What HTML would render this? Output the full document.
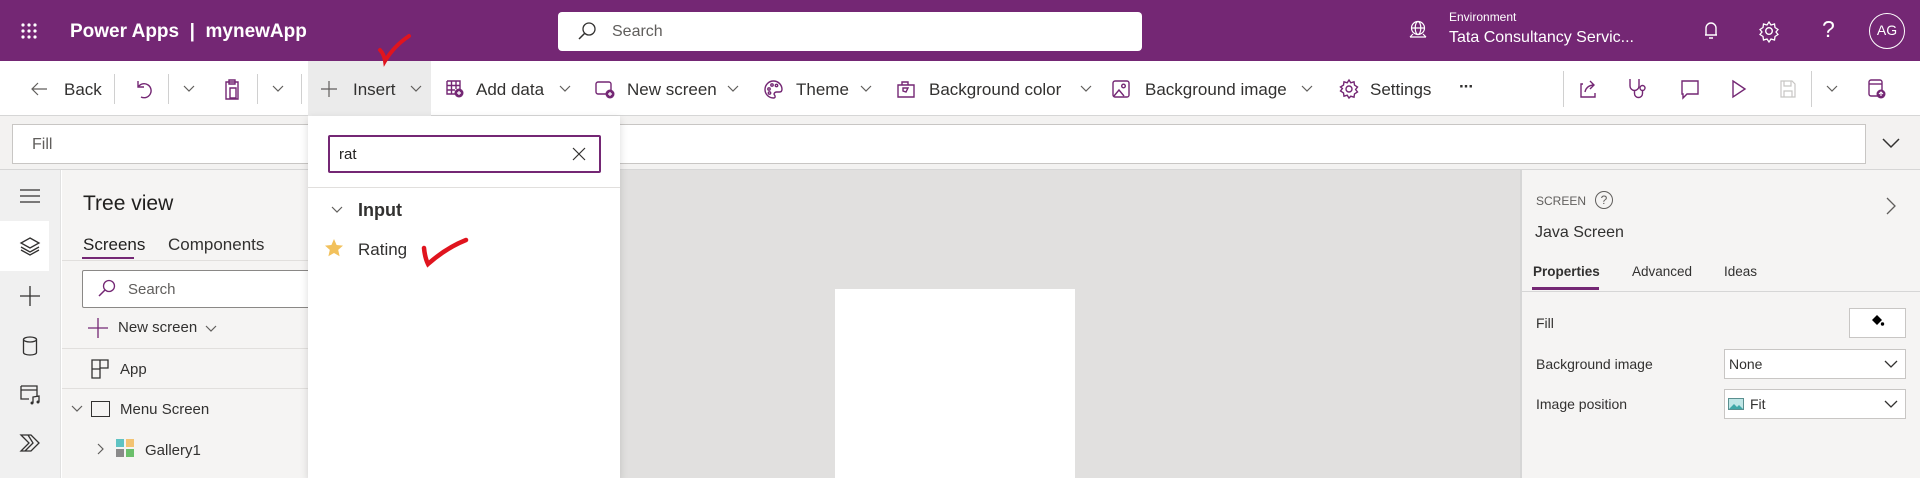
<!DOCTYPE html>
<html><head><meta charset="utf-8"><style>
*{margin:0;padding:0;box-sizing:border-box}
body{width:1920px;height:478px;position:relative;overflow:hidden;font-family:"Liberation Sans",sans-serif;color:#323130;background:#fff}
.a{position:absolute}
.t{position:absolute;white-space:nowrap;line-height:1}
svg{position:absolute;overflow:visible}
.ic{stroke:#742774;fill:none;stroke-width:1.4}
.gr{stroke:#605e5c;fill:none;stroke-width:1.2}
</style></head><body>
<!-- header -->
<div class="a" style="left:0;top:0;width:1920px;height:61px;background:#742774"></div>
<svg style="left:21px;top:23px" width="16" height="16"><g fill="#fff"><circle cx="2" cy="2" r="1.6"/><circle cx="8" cy="2" r="1.6"/><circle cx="14" cy="2" r="1.6"/><circle cx="2" cy="8" r="1.6"/><circle cx="8" cy="8" r="1.6"/><circle cx="14" cy="8" r="1.6"/><circle cx="2" cy="14" r="1.6"/><circle cx="8" cy="14" r="1.6"/><circle cx="14" cy="14" r="1.6"/></g></svg>
<div class="t" style="left:70px;top:22px;color:#fff;font-size:19px;font-weight:bold">Power Apps &nbsp;|&nbsp; mynewApp</div>
<div class="a" style="left:558px;top:12px;width:584px;height:39px;background:#fff;border-radius:4px"></div>
<svg style="left:578px;top:22px" width="18" height="18"><circle cx="11" cy="7" r="6" stroke="#323130" fill="none" stroke-width="1.3"/><path d="M6.5 11.5 L1 17" stroke="#323130" stroke-width="1.5"/></svg>
<div class="t" style="left:612px;top:24px;font-size:16px;color:#605e5c">Search</div>
<svg style="left:1408px;top:20px" width="20" height="20"><g stroke="#fff" fill="none" stroke-width="1.2"><circle cx="10" cy="8" r="6.5"/><ellipse cx="10" cy="8" rx="2.8" ry="6.5"/><path d="M3.5 8h13M2 17h16M5 14l-3 3M15 14l3 3"/></g></svg>
<div class="t" style="left:1449px;top:11px;color:#fff;font-size:12px">Environment</div>
<div class="t" style="left:1449px;top:30px;color:#fff;font-size:16px">Tata Consultancy Servic...</div>
<svg style="left:1702px;top:21px" width="18" height="20"><path d="M4 14V7a5 5 0 0 1 10 0v7H3h12M7 17h4" stroke="#fff" fill="none" stroke-width="1.4"/></svg>
<svg style="left:1758px;top:20px" width="22" height="22"><circle cx="11" cy="11" r="3.3" stroke="#fff" fill="none" stroke-width="1.4"/><path d="M11 2l2 3 3.5-1 .5 3.5 3 2-2 2.5 2 2.5-3 2-.5 3.5-3.5-1-2 3-2-3-3.5 1-.5-3.5-3-2 2-2.5-2-2.5 3-2 .5-3.5 3.5 1z" stroke="#fff" fill="none" stroke-width="1.3"/></svg>
<div class="t" style="left:1822px;top:18px;color:#fff;font-size:23px">?</div>
<div class="a" style="left:1869px;top:13px;width:36px;height:36px;border:1.5px solid #fff;border-radius:50%;color:#fff;font-size:14px;text-align:center;line-height:33px">AG</div>
<!-- toolbar -->
<div class="a" style="left:0;top:115px;width:1920px;height:1px;background:#d6d6d6"></div>
<div class="a" style="left:308px;top:61px;width:123px;height:55px;background:#ebebeb"></div>
<svg style="left:30px;top:81px" width="18" height="16"><path d="M17 8H2M8 2L2 8l6 6" class="gr" stroke-width="1.4"/></svg>
<div class="t" style="left:64px;top:81px;font-size:17px">Back</div>
<div class="a" style="left:114px;top:74px;width:1px;height:30px;background:#d0d0d0"></div>
<svg style="left:134px;top:79px" width="18" height="20"><path d="M4 2v6h6M4.5 7.5A7 7 0 1 1 7 18" class="ic"/></svg>
<div class="a" style="left:168px;top:74px;width:1px;height:30px;background:#d0d0d0"></div>
<svg style="left:183px;top:85px" width="12" height="8"><path d="M1 1l5 5 5-5" class="gr"/></svg>
<svg style="left:223px;top:78px" width="18" height="22"><path d="M3 4h12v17H3zM6 2h6v4H6zM7 10h6v10H7z" class="ic"/></svg>
<div class="a" style="left:257px;top:74px;width:1px;height:30px;background:#d0d0d0"></div>
<svg style="left:272px;top:85px" width="12" height="8"><path d="M1 1l5 5 5-5" class="gr"/></svg>
<div class="a" style="left:301px;top:74px;width:1px;height:30px;background:#d0d0d0"></div>
<svg style="left:321px;top:81px" width="16" height="16"><path d="M8 0v16M0 8h16" class="gr" stroke-width="1.4"/></svg>
<div class="t" style="left:353px;top:81px;font-size:17px">Insert</div>
<svg style="left:410px;top:85px" width="12" height="8"><path d="M1 1l5 5 5-5" class="gr"/></svg>
<svg style="left:446px;top:80px" width="18" height="18"><path d="M1 1h13v8M1 1v13h8M1 5.5h13M1 10h8M5.5 1v13M10 1v8" class="ic"/><circle cx="13" cy="13" r="4.5" fill="#742774"/><path d="M13 11v4M11 13h4" stroke="#fff" stroke-width="1.2"/></svg>
<div class="t" style="left:476px;top:81px;font-size:17px">Add data</div>
<svg style="left:559px;top:85px" width="12" height="8"><path d="M1 1l5 5 5-5" class="gr"/></svg>
<svg style="left:595px;top:81px" width="20" height="18"><rect x="1" y="1" width="15" height="12" rx="2" class="ic"/><circle cx="15" cy="13" r="4.5" fill="#742774"/><path d="M15 11v4M13 13h4" stroke="#fff" stroke-width="1.2"/></svg>
<div class="t" style="left:627px;top:81px;font-size:17px">New screen</div>
<svg style="left:727px;top:85px" width="12" height="8"><path d="M1 1l5 5 5-5" class="gr"/></svg>
<svg style="left:764px;top:80px" width="19" height="19"><path d="M9.5 1a8.5 8.5 0 1 0 0 17c2 0 2-2 1-3s0-3 2-3h3c2 0 2.5-1.5 2.5-3A8.5 8.5 0 0 0 9.5 1z" class="ic"/><circle cx="5" cy="9" r="1.2" class="ic"/><circle cx="8" cy="5" r="1.2" class="ic"/><circle cx="12.5" cy="5.5" r="1.2" class="ic"/><circle cx="5.5" cy="13" r="1.2" class="ic"/></svg>
<div class="t" style="left:796px;top:81px;font-size:17px">Theme</div>
<svg style="left:860px;top:85px" width="12" height="8"><path d="M1 1l5 5 5-5" class="gr"/></svg>
<svg style="left:896px;top:79px" width="20" height="20"><path d="M2 6h16v12H2zM6 6V3h6v3M7 9l5 0-2 4-3-1z" class="ic"/></svg>
<div class="t" style="left:929px;top:81px;font-size:17px">Background color</div>
<svg style="left:1080px;top:85px" width="12" height="8"><path d="M1 1l5 5 5-5" class="gr"/></svg>
<svg style="left:1112px;top:80px" width="18" height="18"><rect x="1" y="1" width="16" height="16" rx="2" class="ic"/><circle cx="11.5" cy="6" r="1.8" class="ic"/><path d="M2 16l5-6 5 6" class="ic"/></svg>
<div class="t" style="left:1145px;top:81px;font-size:17px">Background image</div>
<svg style="left:1301px;top:85px" width="12" height="8"><path d="M1 1l5 5 5-5" class="gr"/></svg>
<svg style="left:1339px;top:79px" width="20" height="20"><circle cx="10" cy="10" r="3" class="ic"/><path d="M10 1l1.8 2.8 3.2-1 .5 3.3 3 1.9-1.9 2.5 1.9 2.5-3 1.9-.5 3.3-3.2-1L10 19l-1.8-2.8-3.2 1-.5-3.3-3-1.9 1.9-2.5L1.5 8l3-1.9.5-3.3 3.2 1z" class="ic"/></svg>
<div class="t" style="left:1370px;top:81px;font-size:17px">Settings</div>
<div class="t" style="left:1459px;top:78px;font-size:17px;font-weight:bold;letter-spacing:-1px">···</div>
<div class="a" style="left:1563px;top:71px;width:1px;height:36px;background:#d0d0d0"></div>
<svg style="left:1580px;top:80px" width="18" height="18"><path d="M3 4H1v13h14v-4M5 12c1-5 5-7 9-7M10 1l4 4-4 4" class="ic"/></svg>
<svg style="left:1628px;top:78px" width="20" height="22"><path d="M2 1v7a4.5 4.5 0 0 0 9 0V1M6.5 12.5v3a4 4 0 0 0 8 0v-3" class="ic"/><circle cx="14.5" cy="10" r="2.5" class="ic"/></svg>
<svg style="left:1680px;top:80px" width="20" height="20"><path d="M2 1h16v13H7l-4 4v-4H2z" class="ic"/></svg>
<svg style="left:1731px;top:80px" width="16" height="18"><path d="M2 1l12 8-12 8z" class="ic"/></svg>
<svg style="left:1780px;top:80px" width="16" height="18"><path d="M1 1h11l3 3v13H1zM4 1v5h7V1M4 17v-6h8v6" stroke="#c8c6c4" fill="none" stroke-width="1.2"/></svg>
<div class="a" style="left:1811px;top:71px;width:1px;height:36px;background:#d0d0d0"></div>
<svg style="left:1826px;top:85px" width="12" height="8"><path d="M1 1l5 5 5-5" class="gr"/></svg>
<svg style="left:1868px;top:79px" width="18" height="20"><rect x="1" y="1" width="13" height="16" rx="2" class="ic"/><path d="M1 5h13" class="ic"/><circle cx="13" cy="15" r="4.5" fill="#742774"/><path d="M13 17v-4M11 15l2-2 2 2" stroke="#fff" stroke-width="1.1" fill="none"/></svg>
<!-- red check near insert -->
<svg style="left:376px;top:32px" width="40" height="32"><path d="M4 18 Q8 22 9 29 Q18 14 33 4" stroke="#e0141e" stroke-width="4" fill="none" stroke-linecap="round"/></svg>
<!-- formula bar -->
<div class="a" style="left:0;top:116px;width:1920px;height:54px;background:#f3f2f1"></div>
<div class="a" style="left:12px;top:124px;width:1854px;height:40px;background:#fff;border:1px solid #c8c6c4"></div>
<div class="t" style="left:32px;top:137px;font-size:16px;color:#605e5c">Fill</div>
<svg style="left:1882px;top:138px" width="18" height="11"><path d="M1 1l8 8 8-8" stroke="#323130" fill="none" stroke-width="1.5"/></svg>
<div class="a" style="left:0;top:169px;width:1920px;height:1px;background:#d6d6d6"></div>
<!-- left rail -->
<div class="a" style="left:0;top:170px;width:61px;height:308px;background:#f0f0f0;border-right:1px solid #e1e1e1"></div>
<div class="a" style="left:0;top:221px;width:49px;height:50px;background:#fff"></div>
<svg style="left:20px;top:189px" width="20" height="14"><path d="M0 1h20M0 7h20M0 13h20" stroke="#323130" stroke-width="1.2"/></svg>
<svg style="left:20px;top:237px" width="20" height="18"><path d="M10 1l9 5-9 5-9-5zM1 10l9 5 9-5M1 13l9 5 9-5" stroke="#323130" fill="none" stroke-width="1.3"/></svg>
<svg style="left:20px;top:286px" width="20" height="20"><path d="M10 0v20M0 10h20" stroke="#323130" stroke-width="1.3"/></svg>
<svg style="left:22px;top:336px" width="16" height="20"><ellipse cx="8" cy="3.5" rx="6.5" ry="2.5" stroke="#323130" fill="none" stroke-width="1.3"/><path d="M1.5 3.5v13c0 1.5 3 2.5 6.5 2.5s6.5-1 6.5-2.5v-13" stroke="#323130" fill="none" stroke-width="1.3"/></svg>
<svg style="left:20px;top:385px" width="22" height="20"><path d="M1 1h16v11M1 1v13h8M1 5h16" stroke="#323130" fill="none" stroke-width="1.3"/><path d="M13 18V12l6-1v6" stroke="#323130" fill="none" stroke-width="1.3"/><circle cx="12" cy="18" r="1.5" fill="#323130"/><circle cx="18" cy="17" r="1.5" fill="#323130"/></svg>
<svg style="left:20px;top:434px" width="20" height="18"><path d="M1 1h10l8 8-8 8H1l8-8zM5 17l8-8-5-8" stroke="#323130" fill="none" stroke-width="1.3"/></svg>
<!-- tree panel -->
<div class="a" style="left:62px;top:170px;width:246px;height:308px;background:#f5f4f3"></div>
<div class="t" style="left:83px;top:193px;font-size:21px;color:#201f1e">Tree view</div>
<div class="t" style="left:83px;top:236px;font-size:17px;color:#201f1e">Screens</div>
<div class="t" style="left:168px;top:236px;font-size:17px;color:#323130">Components</div>
<div class="a" style="left:82px;top:257px;width:52px;height:2px;background:#742774"></div>
<div class="a" style="left:62px;top:260px;width:246px;height:1px;background:#e1dfdd"></div>
<div class="a" style="left:82px;top:270px;width:230px;height:38px;background:#fff;border:1px solid #8a8886;border-radius:2px"></div>
<svg style="left:98px;top:279px" width="18" height="18"><circle cx="11" cy="7" r="5.5" stroke="#742774" fill="none" stroke-width="1.3"/><path d="M7 11L1 17" stroke="#742774" stroke-width="1.5"/></svg>
<div class="t" style="left:128px;top:282px;font-size:15px;color:#605e5c">Search</div>
<svg style="left:88px;top:318px" width="20" height="20"><path d="M10 0v20M0 10h20" stroke="#742774" stroke-width="1.3"/></svg>
<div class="t" style="left:118px;top:320px;font-size:15px;color:#323130">New screen</div>
<svg style="left:205px;top:325px" width="12" height="8"><path d="M1 1l5 5 5-5" class="gr"/></svg>
<div class="a" style="left:62px;top:348px;width:246px;height:1px;background:#e1dfdd"></div>
<svg style="left:91px;top:359px" width="18" height="20"><path d="M1 1h16v8H9v10H1zM1 10h8M9 1v8" stroke="#323130" fill="none" stroke-width="1.3"/></svg>
<div class="t" style="left:120px;top:362px;font-size:15px;color:#323130">App</div>
<div class="a" style="left:62px;top:388px;width:246px;height:1px;background:#e1dfdd"></div>
<svg style="left:71px;top:405px" width="12" height="8"><path d="M1 1l5 5 5-5" class="gr"/></svg>
<div class="a" style="left:91px;top:401px;width:19px;height:16px;border:1.4px solid #323130"></div>
<div class="t" style="left:120px;top:402px;font-size:15px;color:#323130">Menu Screen</div>
<svg style="left:97px;top:443px" width="8" height="12"><path d="M1 1l5 5-5 5" class="gr"/></svg>
<div class="a" style="left:116px;top:439px;width:8px;height:8px;background:#5fc3c3"></div>
<div class="a" style="left:126px;top:439px;width:8px;height:8px;background:#f3c372"></div>
<div class="a" style="left:116px;top:449px;width:8px;height:8px;background:#8a8a8a"></div>
<div class="a" style="left:126px;top:449px;width:8px;height:8px;background:#6bbf6b"></div>
<div class="t" style="left:145px;top:443px;font-size:15px;color:#323130">Gallery1</div>
<!-- canvas -->
<div class="a" style="left:308px;top:170px;width:1212px;height:308px;background:#e1e0df"></div>
<div class="a" style="left:835px;top:289px;width:240px;height:189px;background:#fff"></div>
<!-- insert dropdown -->
<div class="a" style="left:308px;top:116px;width:312px;height:362px;background:#fff;box-shadow:0 3px 8px rgba(0,0,0,.15)"></div>
<div class="a" style="left:328px;top:135px;width:273px;height:38px;border:2px solid #742774;border-radius:2px"></div>
<div class="t" style="left:339px;top:147px;font-size:15px;color:#201f1e">rat</div>
<svg style="left:572px;top:147px" width="14" height="14"><path d="M1 1l12 12M13 1L1 13" stroke="#323130" stroke-width="1.2"/></svg>
<div class="a" style="left:308px;top:187px;width:312px;height:1px;background:#e1dfdd"></div>
<svg style="left:331px;top:206px" width="12" height="8"><path d="M1 1l5 5 5-5" class="gr"/></svg>
<div class="t" style="left:358px;top:201px;font-size:18px;font-weight:bold;color:#323130">Input</div>
<svg style="left:325px;top:239px" width="18" height="18"><path d="M9 0l2.6 6 6.4.6-4.8 4.3 1.4 6.3L9 14l-5.6 3.2 1.4-6.3L0 6.6 6.4 6z" fill="#f2c15c"/></svg>
<div class="t" style="left:358px;top:241px;font-size:17px;color:#323130">Rating</div>
<svg style="left:420px;top:236px" width="52" height="32"><path d="M4 12 Q5 22 8 28 Q26 12 46 4" stroke="#e0141e" stroke-width="4.5" fill="none" stroke-linecap="round"/></svg>
<!-- right panel -->
<div class="a" style="left:1520px;top:170px;width:400px;height:308px;background:#f5f4f3;border-left:2px solid #d6d6d6"></div>
<div class="t" style="left:1536px;top:195px;font-size:12px;color:#605e5c">SCREEN</div>
<div class="a" style="left:1595px;top:191px;width:18px;height:18px;border:1px solid #605e5c;border-radius:50%;font-size:12px;text-align:center;line-height:16px;color:#605e5c">?</div>
<svg style="left:1886px;top:197px" width="10" height="18"><path d="M1 1l8 8-8 8" stroke="#605e5c" fill="none" stroke-width="1.3"/></svg>
<div class="t" style="left:1535px;top:225px;font-size:16px;color:#323130">Java Screen</div>
<div class="t" style="left:1533px;top:265px;font-size:13.5px;font-weight:bold;color:#323130">Properties</div>
<div class="t" style="left:1632px;top:265px;font-size:13.5px;color:#323130">Advanced</div>
<div class="t" style="left:1724px;top:265px;font-size:13.5px;color:#323130">Ideas</div>
<div class="a" style="left:1532px;top:287px;width:67px;height:3px;background:#742774"></div>
<div class="a" style="left:1522px;top:291px;width:398px;height:1px;background:#d6d6d6"></div>
<div class="t" style="left:1536px;top:316px;font-size:14px;color:#323130">Fill</div>
<div class="a" style="left:1849px;top:308px;width:57px;height:30px;background:#fff;border:1px solid #c8c6c4"></div>
<svg style="left:1870px;top:314px" width="14" height="14"><path d="M2 6l5-5 5 5-5 5z" fill="#000"/><circle cx="12.5" cy="10" r="1.7" fill="#000"/></svg>
<div class="t" style="left:1536px;top:357px;font-size:14px;color:#323130">Background image</div>
<div class="a" style="left:1724px;top:349px;width:182px;height:30px;background:#fff;border:1px solid #c8c6c4"></div>
<div class="t" style="left:1729px;top:357px;font-size:14px;color:#323130">None</div>
<svg style="left:1884px;top:360px" width="14" height="8"><path d="M1 1l6 6 6-6" stroke="#323130" fill="none" stroke-width="1.3"/></svg>
<div class="t" style="left:1536px;top:397px;font-size:14px;color:#323130">Image position</div>
<div class="a" style="left:1724px;top:389px;width:182px;height:30px;background:#fff;border:1px solid #c8c6c4"></div>
<svg style="left:1728px;top:398px" width="16" height="12"><rect x="0.5" y="0.5" width="15" height="11" fill="#bfe6e6" stroke="#5a8f8f"/><path d="M1 11l5-5 3 3 2-2 4 4z" fill="#3fa7a7"/></svg>
<div class="t" style="left:1750px;top:397px;font-size:14px;color:#323130">Fit</div>
<svg style="left:1884px;top:400px" width="14" height="8"><path d="M1 1l6 6 6-6" stroke="#323130" fill="none" stroke-width="1.3"/></svg>
</body></html>
